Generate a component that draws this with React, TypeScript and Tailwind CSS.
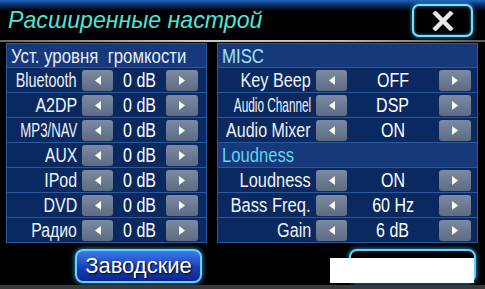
import React from 'react';

type Row = { label: string; value: string; fit: string; header?: boolean };

const leftRows: Row[] = [
  { label: 'Bluetooth', value: '0 dB', fit: 'scale-x-[0.72]' },
  { label: 'A2DP', value: '0 dB', fit: 'scale-x-[0.8]' },
  { label: 'MP3/NAV', value: '0 dB', fit: 'scale-x-[0.66]' },
  { label: 'AUX', value: '0 dB', fit: 'scale-x-[0.78]' },
  { label: 'IPod', value: '0 dB', fit: 'scale-x-[0.8]' },
  { label: 'DVD', value: '0 dB', fit: 'scale-x-[0.8]' },
  { label: 'Радио', value: '0 dB', fit: 'scale-x-[0.79]' },
];

const rightRows: Row[] = [
  { label: 'Key Beep', value: 'OFF', fit: 'scale-x-[0.81]' },
  { label: 'Audio Channel', value: 'DSP', fit: 'scale-x-[0.59]' },
  { label: 'Audio Mixer', value: 'ON', fit: 'scale-x-[0.8]' },
  { label: 'Loudness', value: '', fit: '', header: true },
  { label: 'Loudness', value: 'ON', fit: 'scale-x-[0.82]' },
  { label: 'Bass Freq.', value: '60 Hz', fit: 'scale-x-[0.83]' },
  { label: 'Gain', value: '6 dB', fit: 'scale-x-[0.81]' },
];

const Arrow = ({ dir }: { dir: 'left' | 'right' }) => (
  <div className="h-[21px] rounded-[3px] bg-[linear-gradient(to_bottom,#7b8aa0,#5d6c82)] flex items-center justify-center">
    <svg width="6" height="9" viewBox="0 0 6 9">
      {dir === 'left' ? (
        <polygon points="6,0 6,9 0,4.5" fill="#ffffff" />
      ) : (
        <polygon points="0,0 0,9 6,4.5" fill="#ffffff" />
      )}
    </svg>
  </div>
);

const PanelHeader = ({ children }: { children: React.ReactNode }) => (
  <div className="h-[23px] bg-[#15397a] flex items-center pl-[4px] text-[20px] leading-none whitespace-pre">
    {children}
  </div>
);

const SettingRow = ({ row, cols }: { row: Row; cols: string }) =>
  row.header ? (
    <div className="h-[25px] border-t border-[#2a5a9c] bg-[#15397a] flex items-center pl-[4px] text-[20px] leading-none text-[#62d6f2]">
      <span className="inline-block origin-left scale-x-[0.83]">{row.label}</span>
    </div>
  ) : (
    <div className={`h-[25px] border-t border-[#2a5a9c] grid ${cols} items-center`}>
      <div className="flex justify-end pr-[5px] whitespace-nowrap text-[20px] leading-none text-[#eef1f6]">
        <span className={`inline-block shrink-0 origin-right ${row.fit}`}>{row.label}</span>
      </div>
      <Arrow dir="left" />
      <div className="text-center whitespace-nowrap text-[20px] leading-none text-white">
        <span className="inline-block scale-x-[0.8]">{row.value}</span>
      </div>
      <Arrow dir="right" />
    </div>
  );

export default function App() {
  return (
    <div className="relative w-[485px] h-[289px] overflow-hidden bg-black flex flex-col font-['Liberation_Sans',Arial,sans-serif]">
      {/* title bar */}
      <div className="h-[40px] flex items-start justify-between bg-[linear-gradient(to_bottom,#1f66bd_0px,#0c2d62_5px,#000000_11px)]">
        <div className="pl-[8px] pt-[6px] text-[24px] leading-[28px] italic text-[#4fe3d9] whitespace-nowrap">
          <span className="inline-block origin-left scale-x-[0.965]">Расширенные настрой</span>
        </div>
        <div className="mt-[4px] mr-[12px] w-[61px] h-[33px] rounded-[7px] border-2 border-[#7fdcf5] bg-black shadow-[0_0_4px_#2a9fe0,inset_0_0_3px_#2a9fe0] flex items-center justify-center">
          <svg width="22" height="20" viewBox="0 0 22 20">
            <path d="M2 1 L20 19 M20 1 L2 19" stroke="#e6e6e6" strokeWidth="4.5" strokeLinecap="butt" />
          </svg>
        </div>
      </div>
      <div className="h-[2px] bg-[linear-gradient(to_right,#6a6a6a,#c9c9c9_40%,#bdbdbd_70%,#5a5a5a)]" />

      {/* panels */}
      <div className="mt-[1px] flex gap-[10px] pl-[6px]">
        <div className="w-[201px] border border-[#2a5a9c] bg-[#0b2961]">
          <PanelHeader>
            <span className="inline-block origin-left scale-x-[0.84] text-[#e8ecf4]">Уст. уровня  громкости</span>
          </PanelHeader>
          {leftRows.map((r, i) => (
            <SettingRow key={i} row={r} cols="grid-cols-[75px_31px_53px_32px]" />
          ))}
        </div>
        <div className="w-[261px] border border-[#2a5a9c] bg-[#0b2961]">
          <PanelHeader>
            <span className="inline-block origin-left scale-x-[0.84] text-[#9fe6f6]">MISC</span>
          </PanelHeader>
          {rightRows.map((r, i) => (
            <SettingRow key={i} row={r} cols="grid-cols-[98px_31px_92px_32px]" />
          ))}
        </div>
      </div>

      {/* bottom buttons */}
      <div className="mt-[6px] flex pl-[75px] gap-[147px]">
        <div className="w-[127px] h-[34px] rounded-[8px] border-2 border-[#63d2ff] bg-[linear-gradient(to_bottom,#3b7bea,#1a3fb8_55%,#0c2590)] shadow-[0_0_5px_#2aa6f0] flex items-center justify-center text-[22px] leading-none text-white [text-shadow:1px_1px_2px_#000]">
          Заводские
        </div>
        <div className="w-[127px] h-[34px] rounded-[8px] border-2 border-[#63d2ff] bg-black shadow-[0_0_5px_#2aa6f0]" />
      </div>
      <div className="mt-auto h-[4px] bg-[#3a3a3a]" />

      {/* white patch covering the right button */}
      <div className="absolute left-[330px] top-[258px] w-[144px] h-[25px] bg-white" />
    </div>
  );
}
